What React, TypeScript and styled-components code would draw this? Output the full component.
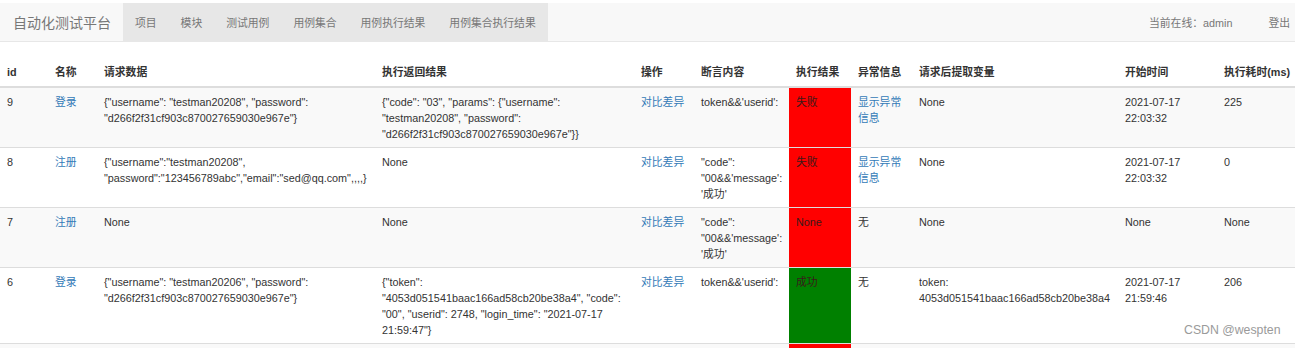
import React from 'react';
import styled, { createGlobalStyle, css } from 'styled-components';

const GlobalStyle = createGlobalStyle`
  body {
    margin: 0;
    background: #ffffff;
    font-family: 'Liberation Sans', Arial, 'Noto Sans CJK SC', sans-serif;
    color: #333333;
  }
`;

type Status = 'fail' | 'pass';

interface Row {
  id: string;
  name: string;
  request: string;
  response: string;
  assertion: string;
  result: string;
  status: Status;
  error: string | null;
  extracted: string;
  start: string;
  cost: string;
}

const rows: Row[] = [
  {
    id: '9',
    name: '登录',
    request: '{"username": "testman20208", "password": "d266f2f31cf903c870027659030e967e"}',
    response:
      '{"code": "03", "params": {"username": "testman20208", "password": "d266f2f31cf903c870027659030e967e"}}',
    assertion: "token&&'userid':",
    result: '失败',
    status: 'fail',
    error: '显示异常信息',
    extracted: 'None',
    start: '2021-07-17 22:03:32',
    cost: '225',
  },
  {
    id: '8',
    name: '注册',
    request: '{"username":"testman20208", "password":"123456789abc","email":"sed@qq.com",,,,}',
    response: 'None',
    assertion: "\"code\": \"00&&'message': '成功'",
    result: '失败',
    status: 'fail',
    error: '显示异常信息',
    extracted: 'None',
    start: '2021-07-17 22:03:32',
    cost: '0',
  },
  {
    id: '7',
    name: '注册',
    request: 'None',
    response: 'None',
    assertion: "\"code\": \"00&&'message': '成功'",
    result: 'None',
    status: 'fail',
    error: null,
    extracted: 'None',
    start: 'None',
    cost: 'None',
  },
  {
    id: '6',
    name: '登录',
    request: '{"username": "testman20206", "password": "d266f2f31cf903c870027659030e967e"}',
    response:
      '{"token": "4053d051541baac166ad58cb20be38a4", "code": "00", "userid": 2748, "login_time": "2021-07-17 21:59:47"}',
    assertion: "token&&'userid':",
    result: '成功',
    status: 'pass',
    error: null,
    extracted: 'token: 4053d051541baac166ad58cb20be38a4',
    start: '2021-07-17 21:59:46',
    cost: '206',
  },
  {
    id: '5',
    name: '登录',
    request: '{"username": "testman20206", "password": "123456"}',
    response: 'None',
    assertion: "token&&'userid':",
    result: '失败',
    status: 'fail',
    error: '显示异常信息',
    extracted: 'None',
    start: '2021-07-17 21:58:10',
    cost: '0',
  },
];

const columns: { label: string; width: number }[] = [
  { label: 'id', width: 48 },
  { label: '名称', width: 49 },
  { label: '请求数据', width: 278 },
  { label: '执行返回结果', width: 259 },
  { label: '操作', width: 60 },
  { label: '断言内容', width: 95 },
  { label: '执行结果', width: 62 },
  { label: '异常信息', width: 61 },
  { label: '请求后提取变量', width: 206 },
  { label: '开始时间', width: 99 },
  { label: '执行耗时(ms)', width: 78 },
];

const navItems = ['项目', '模块', '测试用例', '用例集合', '用例执行结果', '用例集合执行结果'];

export default function App() {
  return (
    <Page>
      <GlobalStyle />
      <Navbar>
        <Brand>自动化测试平台</Brand>
        <NavList>
          {navItems.map(item => (
            <NavItem key={item}>{item}</NavItem>
          ))}
        </NavList>
        <NavRight>
          <NavItem>当前在线：admin</NavItem>
          <NavItem $tight>登出</NavItem>
        </NavRight>
      </Navbar>

      <Table>
        <colgroup>
          {columns.map(col => (
            <col key={col.label} style={{ width: col.width }} />
          ))}
        </colgroup>
        <thead>
          <tr>
            {columns.map(col => (
              <Th key={col.label}>{col.label}</Th>
            ))}
          </tr>
        </thead>
        <tbody>
          {rows.map((row, i) => (
            <Tr key={row.id} $striped={i % 2 === 0}>
              <Td>{row.id}</Td>
              <Td>
                <Link>{row.name}</Link>
              </Td>
              <Td>{row.request}</Td>
              <Td>{row.response}</Td>
              <Td>
                <Link>对比差异</Link>
              </Td>
              <Td $narrowRight>{row.assertion}</Td>
              <ResultTd $status={row.status}>{row.result}</ResultTd>
              <Td>{row.error ? <Link>{row.error}</Link> : '无'}</Td>
              <Td>{row.extracted}</Td>
              <Td>{row.start}</Td>
              <Td>{row.cost}</Td>
            </Tr>
          ))}
        </tbody>
      </Table>

      <Watermark>CSDN @wespten</Watermark>
    </Page>
  );
}

const Page = styled.div`
  position: relative;
  padding-top: 3px;
`;

const Navbar = styled.nav`
  display: flex;
  align-items: stretch;
  height: 38px;
  background-color: #f8f8f8;
  border-bottom: 1px solid #e7e7e7;
  margin-bottom: 16px;
`;

const Brand = styled.div`
  display: flex;
  align-items: center;
  padding: 0 12px 0 13px;
  font-family: 'Noto Sans CJK SC', sans-serif;
  font-size: 14px;
  color: #777777;
`;

const NavList = styled.div`
  display: flex;
  align-items: stretch;
  background-color: #e7e7e7;
`;

const NavItem = styled.div<{ $tight?: boolean }>`
  display: flex;
  align-items: center;
  padding: 0 12px;
  font-family: 'Liberation Sans', 'Noto Sans CJK SC', sans-serif;
  font-size: 10.8px;
  color: #777777;
  white-space: nowrap;

  ${props =>
    props.$tight &&
    css`
      padding: 0 5px 0 24px;
    `};
`;

const NavRight = styled.div`
  display: flex;
  align-items: stretch;
  margin-left: auto;
`;

const Table = styled.table`
  width: 1295px;
  table-layout: fixed;
  border-collapse: collapse;
  border-spacing: 0;
  font-size: 10.8px;
  line-height: 16px;
`;

const Th = styled.th`
  text-align: left;
  vertical-align: bottom;
  padding: 6px 7px;
  font-weight: bold;
  font-family: 'Liberation Sans', 'Noto Sans CJK SC', sans-serif;
  color: #333333;
  white-space: nowrap;
  border-bottom: 2px solid #dddddd;
`;

const Tr = styled.tr<{ $striped: boolean }>`
  background-color: ${props => (props.$striped ? '#f9f9f9' : '#ffffff')};
`;

const Td = styled.td<{ $narrowRight?: boolean }>`
  vertical-align: top;
  padding: 6px 7px 5px;
  border-top: 1px solid #dddddd;
  word-wrap: break-word;
  color: #333333;

  ${props =>
    props.$narrowRight &&
    css`
      padding-right: 1px;
    `};
`;

const ResultTd = styled(Td)<{ $status: Status }>`
  background-color: ${props => (props.$status === 'pass' ? '#008000' : '#ff0000')};
  color: #3a1a1a;
`;

const Link = styled.a`
  color: #337ab7;
  text-decoration: none;
  cursor: pointer;
`;

const Watermark = styled.div`
  position: absolute;
  left: 1184px;
  top: 323px;
  font-family: 'Liberation Sans', sans-serif;
  font-size: 12.3px;
  color: #9a9a9a;
  white-space: nowrap;
`;
